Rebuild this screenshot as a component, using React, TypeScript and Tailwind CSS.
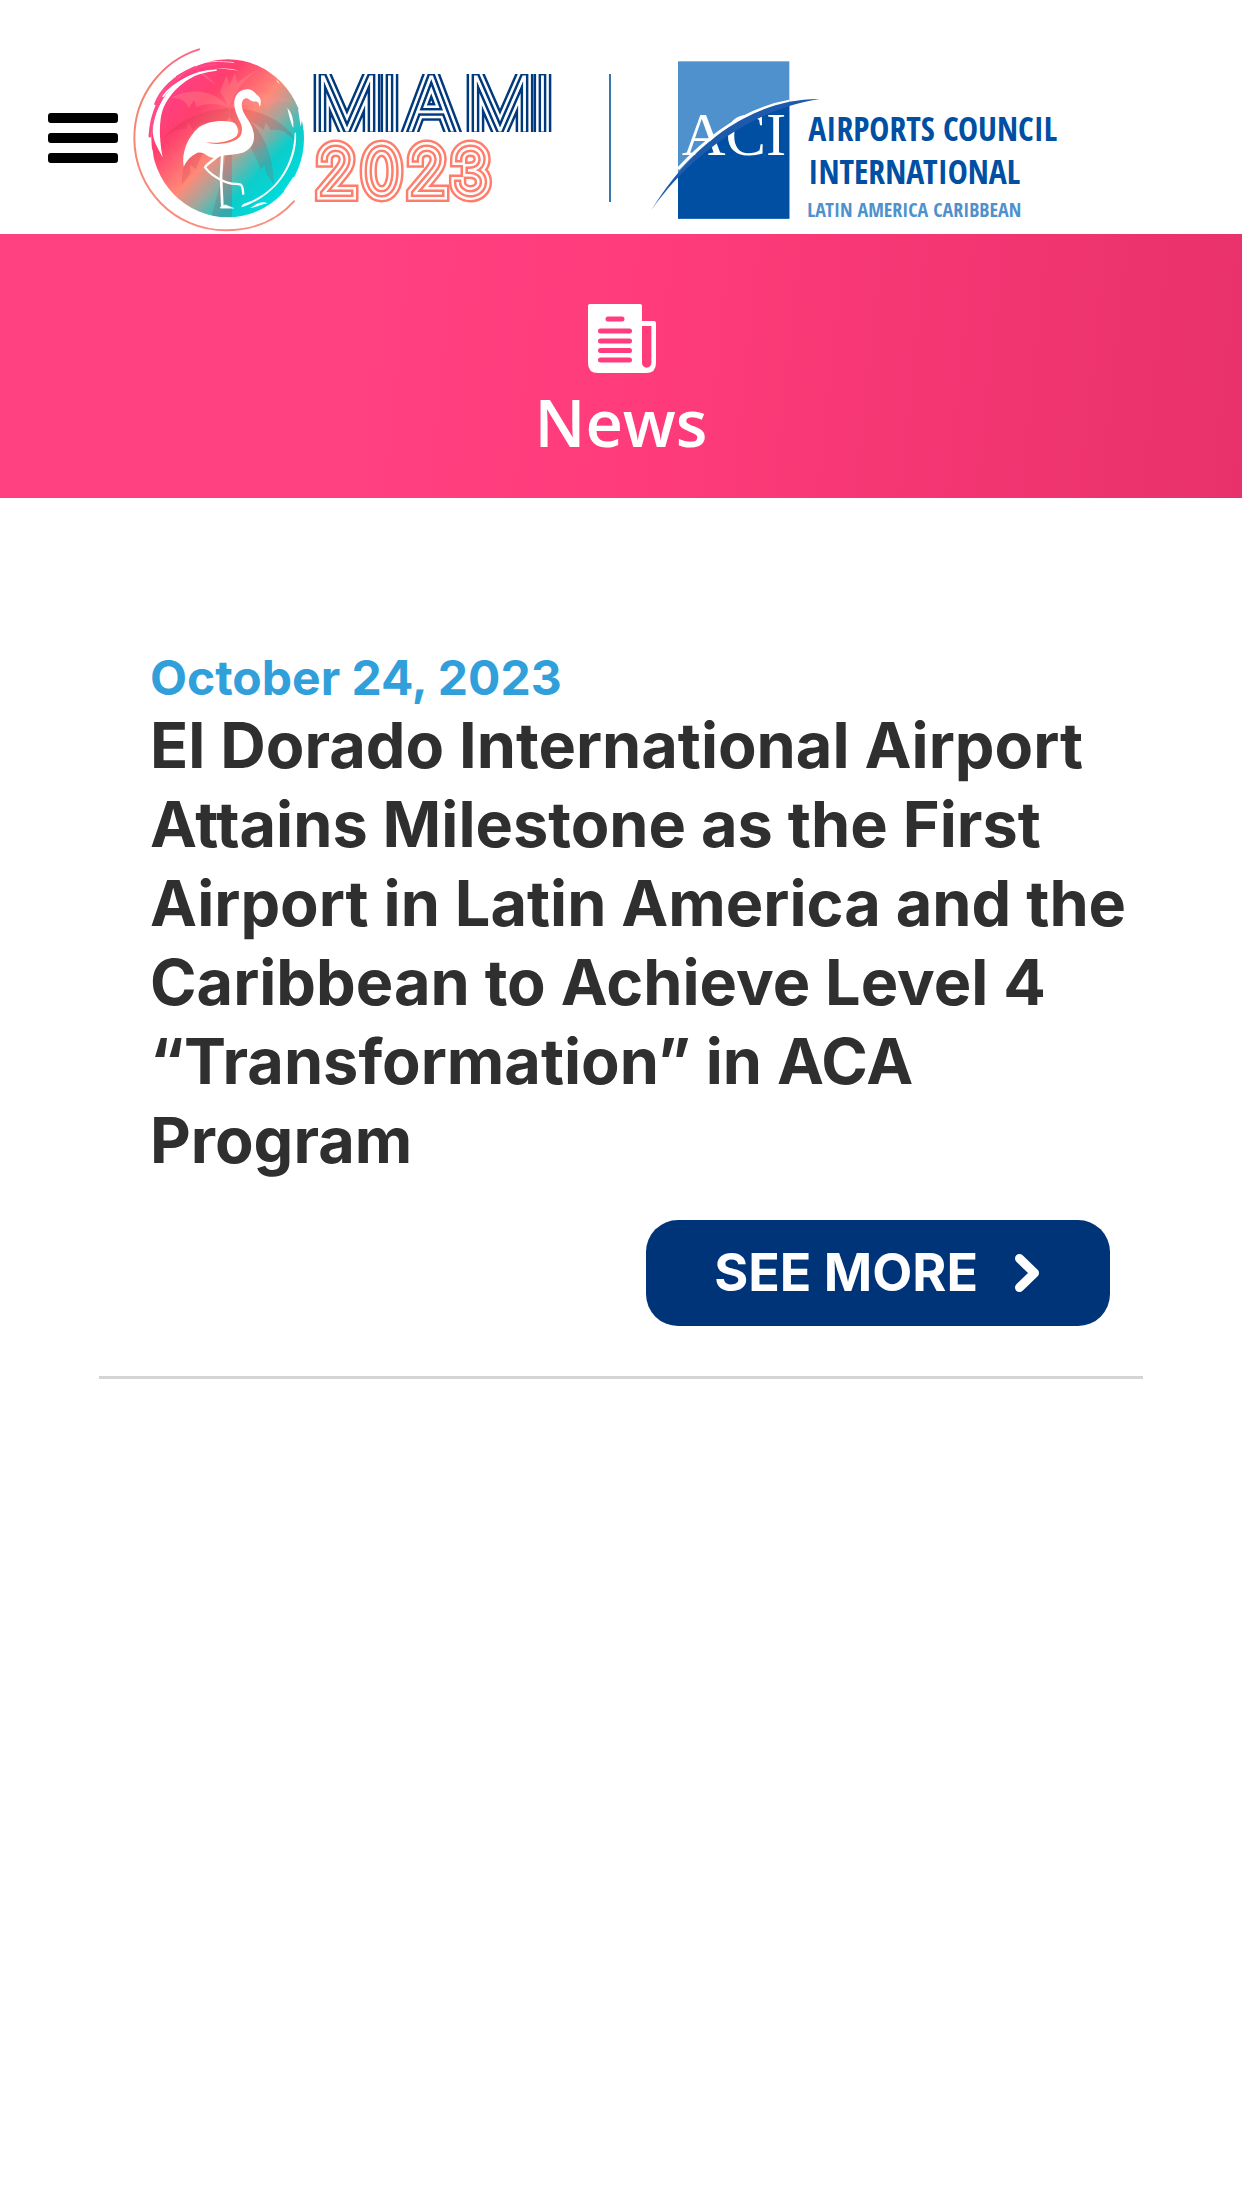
const articles = [
  {
    date: "October 24, 2023",
    title:
      "El Dorado International Airport Attains Milestone as the First Airport in Latin America and the Caribbean to Achieve Level 4 “Transformation” in ACA Program",
  },
];

function FlamingoEmblem() {
  return (
    <svg viewBox="300 39 540 570" className="w-[180px] h-[190px] shrink-0" aria-hidden="true">
      <defs>
        <linearGradient id="sunset" gradientUnits="userSpaceOnUse" x1="420" y1="170" x2="760" y2="490">
          <stop offset="0" stopColor="#ff4088" />
          <stop offset="0.22" stopColor="#ff3f6e" />
          <stop offset="0.5" stopColor="#ff8a78" />
          <stop offset="0.64" stopColor="#a3a79c" />
          <stop offset="0.8" stopColor="#10cbc8" />
          <stop offset="1" stopColor="#00dcdc" />
        </linearGradient>
        <linearGradient id="ring" x1="0" y1="0" x2="0" y2="1">
          <stop offset="0" stopColor="#ff5f88" />
          <stop offset="0.2" stopColor="#f4826f" />
          <stop offset="1" stopColor="#fb8d80" />
        </linearGradient>
        <clipPath id="disc">
          <ellipse cx="593" cy="325" rx="229" ry="237" />
        </clipPath>
      </defs>

      {/* outer ring */}
      <path
        d="M507 58C398 92 313 196 313 325C313 478 435 601 588 601C670 601 742 570 792 514"
        fill="none"
        stroke="url(#ring)"
        strokeWidth="6"
        strokeLinecap="round"
      />

      <g clipPath="url(#disc)">
        <rect x="350" y="80" width="480" height="490" fill="url(#sunset)" />
        {/* palm tree */}
        <g fill="#c2303f" opacity="0.22">
          <path d="M597 235C540 235 440 262 385 345C430 290 455 300 470 295L476 275L488 300C520 270 570 262 597 250Z" />
          <path d="M590 240C530 250 460 330 455 465L482 430L480 405L498 418C520 350 570 290 600 260Z" />
          <path d="M600 240C660 250 730 330 732 465L708 430L704 405L692 420C670 350 620 290 598 260Z" />
          <path d="M600 235C660 232 770 262 805 345C760 290 740 300 722 300L708 278L700 300C670 270 625 262 598 250Z" />
          <path d="M590 340L606 340L606 565L543 565C560 500 585 430 590 340Z" />
        </g>
        <g fill="#ff8f8a" opacity="0.35">
          <path d="M597 232C560 190 500 165 420 205C455 200 470 218 476 235L492 210L500 232C530 215 570 222 597 232Z" />
          <path d="M597 232C575 190 550 140 500 120C530 150 560 160 570 185L590 135L598 165L615 130L622 160C640 140 680 120 720 105C660 120 615 180 597 232Z" />
          <path d="M600 232C640 190 720 180 790 215C740 208 720 225 712 240L696 212L690 235C660 222 625 222 600 232Z" />
        </g>
        <path d="M606 390L822 300L800 500L700 570L606 565Z" fill="#00dcdc" opacity="0.15" />
      </g>

      {/* brush marks */}
      <g fill="#fff">
        <path d="M350 322C352 240 395 160 470 122L482 106C420 128 372 180 350 250Z" />
        <path d="M626 122C600 112 560 114 534 122C470 140 418 186 398 240C388 270 386 320 398 382C378 345 368 330 368 298C374 250 392 212 420 178C458 138 528 104 626 122Z" />
        <path d="M355 330C360 345 366 350 370 372L366 420L390 470L420 500L364 450L352 300Z" />
        <path d="M798 308C804 400 740 498 634 532C636 524 640 520 650 518C730 492 792 410 794 308Z" />
        <path d="M772 234C784 246 792 268 790 294C782 278 778 260 772 234Z" />
        <path d="M660 534C680 520 700 512 712 520C696 522 680 532 660 534Z" />
        <path d="M738 148L750 162L742 156Z" />
        <path d="M804 236L812 290L816 270L824 312L830 260Z" />
        <path d="M762 482L790 440L800 450L768 492Z" />
      </g>
      <g fill="none" stroke="#ff4a86" strokeLinecap="round">
        <path d="M360 318C364 250 392 190 440 148" strokeWidth="9" />
        <path d="M376 222C392 180 432 140 494 112" strokeWidth="7" />
        <path d="M440 140C478 116 520 104 560 104" strokeWidth="5" />
      </g>
      <path d="M398 200C430 158 490 128 560 120" fill="none" stroke="#fff" strokeWidth="5" />
      <path d="M480 108C530 92 570 92 612 98" fill="none" stroke="#fff" strokeWidth="2" />

      {/* flamingo */}
      <path
        d="M690 230L685 218C680 212 673 216 667 214C659 212 656 205 648 205C638 206 634 218 636 232C639 256 665 276 671 308C676 336 664 358 638 368C614 375 592 374 572 378C562 386 545 386 530 376C524 370 514 366 502 368C484 376 470 390 461 410C454 366 474 322 502 296C530 270 592 268 614 280C624 290 627 304 620 318C632 314 638 300 634 284C624 262 611 240 613 214C616 190 634 177 655 178C670 180 678 192 688 202C694 210 693 220 690 230Z"
        fill="#fff"
      />
      <path d="M526 336C560 342 600 336 620 318C630 310 634 296 630 280C642 306 634 324 612 332C584 343 550 345 526 336Z" fill="#f97066" />
      <g fill="none" stroke="#fff" strokeLinejoin="round">
        <path d="M577 372L573 440L577 530" strokeWidth="8" />
        <path d="M570 532L586 524L612 535L572 535Z" fill="#fff" strokeWidth="1" />
        <path d="M566 374C552 392 534 398 525 412C540 432 560 444 580 453C600 464 618 460 632 464C640 470 638 480 640 494" strokeWidth="7" />
      </g>
    </svg>
  );
}

// Outlines stacked from wide to narrow give the inline stripes of the lettering
function Stripes({ href, color }: { href: string; color: string }) {
  return (
    <g strokeLinejoin="miter">
      <use href={href} fill={color} stroke={color} strokeWidth="16" />
      <use href={href} fill="#fff" stroke="#fff" strokeWidth="11" />
      <use href={href} fill={color} stroke={color} strokeWidth="6" />
      <use href={href} fill="#fff" stroke="#fff" strokeWidth="1" />
    </g>
  );
}

function EventName() {
  return (
    <svg viewBox="0 -27 245 190" className="w-[245px] h-[190px] shrink-0" role="img" aria-label="Miami 2023">
      <defs>
        <text id="city" x="3 70 97 156 223" y="61" fontFamily="Inter, sans-serif" fontWeight="100" fontSize="76">MIAMI</text>
        <text id="year" x="7 53 98 142" y="124" fontFamily="Inter, sans-serif" fontWeight="100" fontSize="63">2023</text>
        <clipPath id="band">
          <rect x="0" y="4" width="245" height="58" />
        </clipPath>
      </defs>
      <g clipPath="url(#band)">
        <Stripes href="#city" color="#003a7d" />
      </g>
      <Stripes href="#year" color="#ff7d6b" />
    </svg>
  );
}

function CouncilLogo() {
  return (
    <svg viewBox="0 -24 1260 522" className="w-[420px] h-[174px] mt-1 shrink-0" role="img" aria-label="Airports Council International Latin America Caribbean">
      <rect x="87" y="1" width="334" height="472" fill="#4f91cd" />
      <path d="M87 340C180 232 300 150 421 128V473H87Z" fill="#004fa3" />
      <text x="98" y="282" fontFamily="Liberation Serif, serif" fontSize="182" fill="#fff">ACI</text>
      <path d="M87 324C185 218 300 142 421 121" fill="none" stroke="#fff" strokeWidth="9" />
      <path d="M7 448C110 276 290 112 512 114C330 140 130 270 7 448Z" fill="#1d5aab" />
      <g fontFamily="Open Sans Condensed, Roboto Condensed, Roboto, sans-serif">
        <g fontSize="101" fontWeight="700" fill="#004fa3">
          <text x="478" y="241">AIRPORTS COUNCIL</text>
          <text x="478" y="368">INTERNATIONAL</text>
        </g>
        <text x="475" y="468" fontSize="60" fontWeight="300" fill="#4f91cd">LATIN AMERICA CARIBBEAN</text>
      </g>
    </svg>
  );
}

function NewspaperIcon() {
  return (
    <svg viewBox="-3 0 72 69" className="w-[72px] h-[69px]" aria-hidden="true">
      <path
        d="M2 0H52Q54 0 54 2V17H66Q68 17 68 19V59Q68 69 58 69H10Q0 69 0 59V2Q0 0 2 0ZM54 22V59A4.7 4.7 0 0 0 63.400 59V22Z"
        fill="#fff"
        fillRule="evenodd"
      />
      <g stroke="#ff3d7f" strokeWidth="5" strokeLinecap="round">
        <path d="M20 15H34" />
        <path d="M12.500 27H41.500M12.500 37H41.500M12.500 46.500H41.500M12.500 56H41.500" />
      </g>
    </svg>
  );
}

function ChevronIcon() {
  return (
    <svg viewBox="0 0 26 40" className="w-[26px] h-10" aria-hidden="true">
      <path d="M5.500 5.500L20.500 20L5.500 34.500" fill="none" stroke="currentColor" strokeWidth="9" strokeLinecap="round" strokeLinejoin="round" />
    </svg>
  );
}

export default function App() {
  return (
    <div className="min-h-screen bg-white font-['Inter',sans-serif]">
      <header className="flex items-center pl-12 pt-[43px] pb-px">
        <button type="button" aria-label="Open menu" className="flex flex-col gap-[10px] w-[70px] mr-3 shrink-0">
          <span className="h-[10px] w-full rounded-[3px] bg-black" />
          <span className="h-[10px] w-full rounded-[3px] bg-black" />
          <span className="h-[10px] w-full rounded-[3px] bg-black" />
        </button>
        <FlamingoEmblem />
        <EventName />
        <div className="ml-[54px] mr-[38px] h-32 w-[2px] bg-[#3a76a8] shrink-0" />
        <CouncilLogo />
      </header>

      <section className="flex flex-col items-center h-[264px] pt-[70px] bg-[linear-gradient(96deg,#ff4081_0%,#ff4081_30%,#ff3b7b_52%,#e8316b_100%)]">
        <NewspaperIcon />
        <h1 className="mt-1 text-[65px] leading-[90px] font-semibold text-white font-['Open_Sans',sans-serif]">News</h1>
      </section>

      <main className="px-[99px] pt-[151px]">
        {articles.map((article) => (
          <article key={article.title} className="border-b-[3px] border-[#d5d5d5] pb-[50px] pl-[51px]">
            <p className="text-[48px] leading-[57px] font-bold text-[#31a0da]">{article.date}</p>
            <h2 className="text-[63px] leading-[79px] font-bold text-[#2f2f2f]">{article.title}</h2>
            <div className="mt-10 mr-[33px] flex justify-end">
              <a href="#" className="flex items-center h-[106px] pl-[68px] pr-[70px] gap-9 rounded-[32px] bg-[#003478] text-white">
                <span className="text-[52px] font-bold">SEE MORE</span>
                <ChevronIcon />
              </a>
            </div>
          </article>
        ))}
      </main>
    </div>
  );
}
